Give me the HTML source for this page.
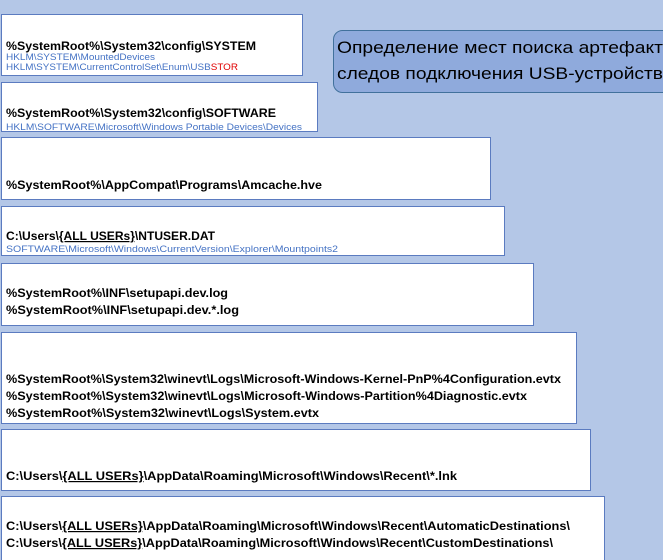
<!DOCTYPE html>
<html><head><meta charset="utf-8"><style>
html,body{margin:0;padding:0;width:663px;height:560px;overflow:hidden;background:#b4c7e7}
svg{display:block}
text{font-family:"Liberation Sans",sans-serif}
.b{font-weight:bold;font-size:12px;fill:#000}
.s{font-size:9px;fill:#4472c4}
.t{font-size:17px;fill:#000}
</style></head><body>
<svg width="663" height="560" xmlns="http://www.w3.org/2000/svg">
<g fill="#fff" stroke="#5b7bc0" stroke-width="1">
<rect x="1.5" y="14.5" width="301" height="61"/>
<rect x="1.5" y="82.5" width="316" height="49"/>
<rect x="1.5" y="137.5" width="489" height="62"/>
<rect x="1.5" y="206.5" width="503" height="49"/>
<rect x="1.5" y="263.5" width="532" height="62"/>
<rect x="1.5" y="332.5" width="575" height="91"/>
<rect x="1.5" y="429.5" width="589" height="61"/>
<rect x="1.5" y="496.5" width="603" height="66"/>
</g>
<rect x="333.5" y="30.5" width="340" height="62" rx="9" fill="#8faadc" stroke="#41719c"/>
<text class="t" x="337" y="53" textLength="326" lengthAdjust="spacingAndGlyphs">Определение мест поиска артефакт</text>
<text class="t" x="337" y="79" textLength="326" lengthAdjust="spacingAndGlyphs">следов подключения USB-устройств</text>

<text class="b" x="6" y="50" textLength="250" lengthAdjust="spacingAndGlyphs">%SystemRoot%\System32\config\SYSTEM</text>
<text class="s" x="6" y="60" textLength="149" lengthAdjust="spacingAndGlyphs">HKLM\SYSTEM\MountedDevices</text>
<text class="s" x="6" y="70" textLength="232" lengthAdjust="spacingAndGlyphs">HKLM\SYSTEM\CurrentControlSet\Enum\USB<tspan fill="#e00000">STOR</tspan></text>

<text class="b" x="6" y="117" textLength="270" lengthAdjust="spacingAndGlyphs">%SystemRoot%\System32\config\SOFTWARE</text>
<text class="s" x="6" y="130" textLength="296" lengthAdjust="spacingAndGlyphs">HKLM\SOFTWARE\Microsoft\Windows Portable Devices\Devices</text>

<text class="b" x="6" y="189" textLength="316" lengthAdjust="spacingAndGlyphs">%SystemRoot%\AppCompat\Programs\Amcache.hve</text>

<text class="b" x="6" y="240" textLength="209" lengthAdjust="spacingAndGlyphs">C:\Users\<tspan text-decoration="underline">{ALL USERs}</tspan>\NTUSER.DAT</text>
<text class="s" x="6" y="252" textLength="332" lengthAdjust="spacingAndGlyphs">SOFTWARE\Microsoft\Windows\CurrentVersion\Explorer\Mountpoints2</text>

<text class="b" x="6" y="297" textLength="222" lengthAdjust="spacingAndGlyphs">%SystemRoot%\INF\setupapi.dev.log</text>
<text class="b" x="6" y="314" textLength="233" lengthAdjust="spacingAndGlyphs">%SystemRoot%\INF\setupapi.dev.*.log</text>

<text class="b" x="6" y="383" textLength="555" lengthAdjust="spacingAndGlyphs">%SystemRoot%\System32\winevt\Logs\Microsoft-Windows-Kernel-PnP%4Configuration.evtx</text>
<text class="b" x="6" y="400" textLength="521" lengthAdjust="spacingAndGlyphs">%SystemRoot%\System32\winevt\Logs\Microsoft-Windows-Partition%4Diagnostic.evtx</text>
<text class="b" x="6" y="417" textLength="313" lengthAdjust="spacingAndGlyphs">%SystemRoot%\System32\winevt\Logs\System.evtx</text>

<text class="b" x="6" y="480" textLength="451" lengthAdjust="spacingAndGlyphs">C:\Users\<tspan text-decoration="underline">{ALL USERs}</tspan>\AppData\Roaming\Microsoft\Windows\Recent\*.lnk</text>

<text class="b" x="6" y="530" textLength="564" lengthAdjust="spacingAndGlyphs">C:\Users\<tspan text-decoration="underline">{ALL USERs}</tspan>\AppData\Roaming\Microsoft\Windows\Recent\AutomaticDestinations\</text>
<text class="b" x="6" y="547" textLength="547" lengthAdjust="spacingAndGlyphs">C:\Users\<tspan text-decoration="underline">{ALL USERs}</tspan>\AppData\Roaming\Microsoft\Windows\Recent\CustomDestinations\</text>
</svg>
</body></html>
